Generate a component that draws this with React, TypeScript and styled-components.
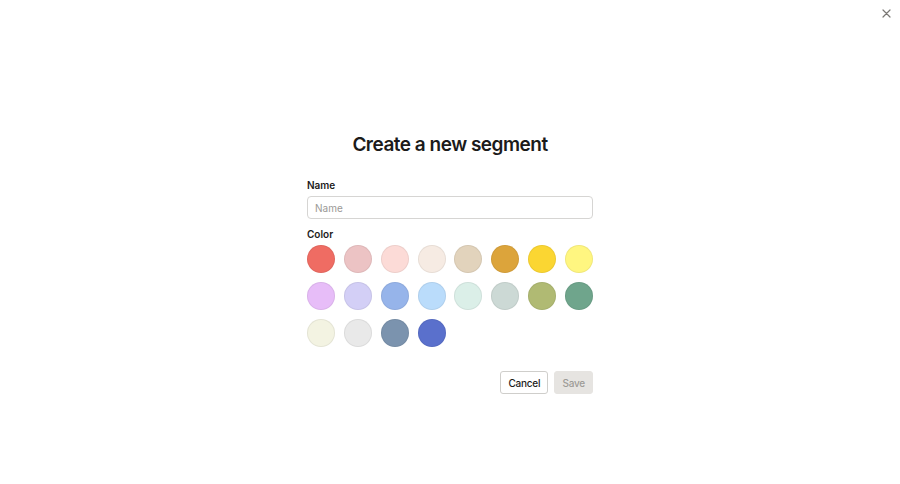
import React from 'react'
import styled, { createGlobalStyle } from 'styled-components'

const GlobalStyle = createGlobalStyle`
  html, body {
    margin: 0;
    padding: 0;
    background: #ffffff;
  }
  body {
    font-family: Inter, "Liberation Sans", sans-serif;
    color: #1c1b1a;
  }
`

const StyledPage = styled.div`
  position: relative;
  width: 900px;
  height: 484px;
  display: flex;
  justify-content: center;
  padding-top: 133px;
  box-sizing: border-box;
`

const CloseButton = styled.button`
  position: absolute;
  top: 6px;
  right: 7px;
  width: 14px;
  height: 14px;
  padding: 0;
  border: none;
  background: transparent;
  display: flex;
  align-items: center;
  justify-content: center;
  cursor: pointer;
`

const StyledForm = styled.div`
  width: 286px;
  display: flex;
  flex-direction: column;
`

const StyledTitle = styled.h1`
  margin: 0 0 22px;
  font-size: 19px;
  font-weight: 600;
  line-height: 24px;
  text-align: center;
  letter-spacing: -0.5px;
  white-space: nowrap;
`

const StyledLabel = styled.label`
  display: block;
  font-size: 10px;
  font-weight: 600;
  line-height: 13px;
  margin-bottom: 4px;
`

const StyledInput = styled.input`
  box-sizing: border-box;
  width: 100%;
  height: 23px;
  padding: 0 7px;
  border: 1px solid #d6d5d3;
  border-radius: 4px;
  font-family: inherit;
  font-size: 10px;
  color: #1c1b1a;
  outline: none;
  margin-bottom: 9px;

  &::placeholder {
    color: #9b9996;
  }
`

const SwatchGrid = styled.div`
  display: grid;
  grid-template-columns: repeat(8, 28px);
  justify-content: space-between;
  row-gap: 9px;
`

const Swatch = styled.button<{ $color: string }>`
  box-sizing: border-box;
  width: 28px;
  height: 28px;
  padding: 0;
  border-radius: 50%;
  border: 1px solid rgba(0, 0, 0, 0.06);
  background: ${p => p.$color};
  cursor: pointer;
`

const StyledActions = styled.div`
  display: flex;
  justify-content: flex-end;
  gap: 6px;
  margin-top: 24px;
`

const StyledButton = styled.button<{ $primary?: boolean }>`
  box-sizing: border-box;
  height: 23px;
  padding: 0 7px;
  border-radius: 3px;
  font-family: inherit;
  font-size: 10px;
  font-weight: 500;
  letter-spacing: -0.2px;
  cursor: pointer;
  border: 1px solid ${p => (p.$primary ? '#e6e4e1' : '#cfcecb')};
  background: ${p => (p.$primary ? '#e6e4e1' : '#ffffff')};
  color: ${p => (p.$primary ? '#9d9b97' : '#1c1b1a')};
`

const colors = [
  '#ef6c63', '#ecc3c4', '#fcdbd7', '#f6ebe3', '#e2d3bc', '#dca43b', '#fbd632', '#fff680',
  '#e7bdf8', '#d3cff6', '#96b4ea', '#badcfb', '#dbefe8', '#ccd9d5', '#b0ba73', '#6fa58c',
  '#f3f3e2', '#e9e9e9', '#7b93ae', '#5a70cc',
]

const App: React.FC<{}> = () => {
  return (
    <StyledPage>
      <GlobalStyle />
      <CloseButton aria-label="Close">
        <svg width="9" height="9" viewBox="0 0 9 9" fill="none" stroke="#7a7874" strokeWidth="1.2" strokeLinecap="round">
          <path d="M1 1l7 7M8 1L1 8" />
        </svg>
      </CloseButton>
      <StyledForm>
        <StyledTitle>Create a new segment</StyledTitle>
        <StyledLabel>Name</StyledLabel>
        <StyledInput placeholder="Name" />
        <StyledLabel>Color</StyledLabel>
        <SwatchGrid>
          {colors.map(c => (
            <Swatch key={c} $color={c} />
          ))}
        </SwatchGrid>
        <StyledActions>
          <StyledButton>Cancel</StyledButton>
          <StyledButton $primary>Save</StyledButton>
        </StyledActions>
      </StyledForm>
    </StyledPage>
  )
}

export default App
